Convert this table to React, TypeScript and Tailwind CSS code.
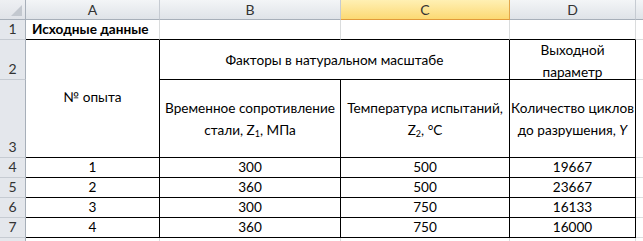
import React from "react";

const F = { fontFamily: "Lato, 'Liberation Sans', sans-serif" };

function ColHead({ label, selected }: { label: string; selected?: boolean }) {
  return (
    <div
      className={
        selected
          ? "flex items-center justify-center border-r border-b border-r-[#e3a64a] border-b-[#e19a3a] bg-gradient-to-b from-[#fff0b3] to-[#fcd972] text-[14px] text-[#333]"
          : "flex items-center justify-center border-r border-b border-r-[#c6cbd2] border-b-[#a7afb9] bg-gradient-to-b from-[#f3f5f7] to-[#dfe3e8] text-[14px] text-[#333]"
      }
    >
      {label}
    </div>
  );
}

function RowHead({ label }: { label: string }) {
  return (
    <div className="flex items-end justify-center border-r border-b border-r-[#a7afb9] border-b-[#c6cbd2] bg-[#e4e7ec] pb-[1px] text-[14px] leading-[18px] text-[#333]">
      {label}
    </div>
  );
}

export default function App() {
  const rows = [
    ["1", "300", "500", "19667"],
    ["2", "360", "500", "23667"],
    ["3", "300", "750", "16133"],
    ["4", "360", "750", "16000"],
  ];
  const black = "border-r border-b border-black";
  return (
    <div className="h-[241px] w-[643px] overflow-hidden bg-white text-black" style={F}>
      <div className="grid h-full grid-cols-[26px_134px_181px_169px_126px_1fr] grid-rows-[20px_20px_40px_78px_20px_20px_20px_20px_1fr]">
        {/* header row */}
        <div className="relative border-r border-b border-r-[#a7afb9] border-b-[#a7afb9] bg-gradient-to-b from-[#eef0f3] to-[#e0e3e8]">
          <svg className="absolute bottom-[3px] right-[3px]" width="11" height="11" viewBox="0 0 11 11">
            <polygon points="11,0 11,11 0,11" fill="#c3c8cf" />
          </svg>
        </div>
        <ColHead label="A" />
        <ColHead label="B" />
        <ColHead label="C" selected />
        <ColHead label="D" />
        <div className="border-b border-b-[#a7afb9] bg-gradient-to-b from-[#f3f5f7] to-[#dfe3e8]" />

        {/* row 1 */}
        <RowHead label="1" />
        <div className="flex items-center border-r border-b border-r-[#dadcdd] border-b-black pl-[6px] text-[13.6px] font-bold whitespace-nowrap">
          Исходные данные
        </div>
        <div className="border-r border-b border-r-[#dadcdd] border-b-black" />
        <div className="border-r border-b border-r-[#dadcdd] border-b-black" />
        <div className="border-r border-b border-r-[#dadcdd] border-b-black" />
        <div className="border-b border-b-[#dadcdd]" />

        {/* row 2 */}
        <RowHead label="2" />
        <div className={`row-span-2 flex items-center justify-center pb-[2px] text-[13.6px] ${black}`}>№ опыта</div>
        <div className={`col-span-2 flex items-center justify-center pt-[2px] text-[13.6px] ${black}`}>
          Факторы в натуральном масштабе
        </div>
        <div className={`flex flex-col items-center justify-center pt-[3px] text-[13.6px] leading-[22px] ${black}`}>
          <span>Выходной</span>
          <span>параметр</span>
        </div>
        <div className="border-b border-b-[#dadcdd]" />

        {/* row 3 */}
        <RowHead label="3" />
        <div className={`flex flex-col items-center justify-center text-[13.6px] leading-[22px] whitespace-nowrap ${black}`}>
          <span>Временное сопротивление</span>
          <span>
            стали, Z<sub className="text-[9px]">1</sub>, МПа
          </span>
        </div>
        <div className={`flex flex-col items-center justify-center text-[13.6px] leading-[22px] whitespace-nowrap ${black}`}>
          <span>Температура испытаний,</span>
          <span>
            Z<sub className="text-[9px]">2</sub>, °С
          </span>
        </div>
        <div className={`flex flex-col items-center justify-center text-[13.6px] leading-[22px] whitespace-nowrap ${black}`}>
          <span>Количество циклов</span>
          <span>
            до разрушения, <i>Y</i>
          </span>
        </div>
        <div className="border-b border-b-[#dadcdd]" />

        {/* data rows */}
        {rows.map((r, i) => (
          <React.Fragment key={i}>
            <RowHead label={String(i + 4)} />
            {r.map((v, j) => (
              <div key={j} className={`flex items-center justify-center text-[13.6px] ${black}`}>
                {v}
              </div>
            ))}
            <div className="border-b border-b-[#dadcdd]" />
          </React.Fragment>
        ))}

        {/* partial row 8 */}
        <div className="border-r border-r-[#a7afb9] bg-[#e4e7ec]" />
        <div className="border-r border-r-[#dadcdd]" />
        <div className="border-r border-r-[#dadcdd]" />
        <div className="border-r border-r-[#dadcdd]" />
        <div className="border-r border-r-[#dadcdd]" />
        <div />
      </div>
    </div>
  );
}
